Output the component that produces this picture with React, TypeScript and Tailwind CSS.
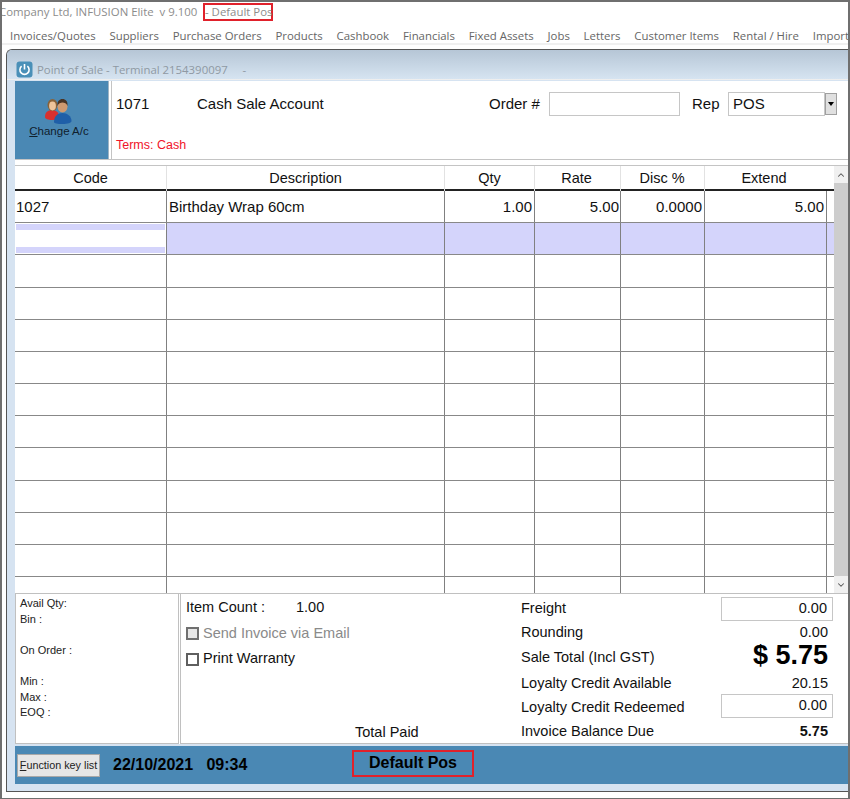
import { ChevronDown, ChevronUp } from "lucide-react";

const menuItems = [
  "Invoices/Quotes",
  "Suppliers",
  "Purchase Orders",
  "Products",
  "Cashbook",
  "Financials",
  "Fixed Assets",
  "Jobs",
  "Letters",
  "Customer Items",
  "Rental / Hire",
  "Import",
];

const columns = "grid grid-cols-[152px_278px_90px_86px_84px_122px_7px]";
const emptyRows = Array.from({ length: 11 }, (_, i) => i);

function PowerIcon() {
  return (
    <svg width="17" height="17" viewBox="0 0 17 17" className="shrink-0">
      <rect x="0.5" y="0.5" width="16" height="16" rx="3" fill="#4a90b8" />
      <path d="M5.6 5.2a4.6 4.6 0 1 0 5.8 0" fill="none" stroke="#fff" strokeWidth="1.6" />
      <path d="M8.5 3v5.4" stroke="#fff" strokeWidth="1.6" />
    </svg>
  );
}

function PeopleIcon() {
  return (
    <svg width="30" height="27" viewBox="0 0 30 27">
      <path d="M1 20c0-5 3-7 7-7s7 2 7 7c0 2-3 3-7 3s-7-1-7-3z" fill="#d8302f" />
      <ellipse cx="8.5" cy="8" rx="5" ry="6" fill="#8a6238" />
      <ellipse cx="8.5" cy="9" rx="3.4" ry="4.4" fill="#eec49a" />
      <path d="M10 25c0-6 4-9 8.5-9s9 3 9 8c0 2-4 3-9 3s-8.5-.5-8.5-2z" fill="#1f5fa8" />
      <ellipse cx="18.5" cy="9.5" rx="5" ry="6" fill="#d09a70" />
      <path d="M13.5 9c-.5-5 2-7 5-7s5.5 2 5 7c-1-3-3-3.5-5-3.5s-4 .5-5 3.5z" fill="#4a3424" />
    </svg>
  );
}

function Checkbox({ disabled }: { disabled?: boolean }) {
  return (
    <span
      className={
        disabled
          ? "w-[13px] h-[13px] border-2 border-[#6f6f6f] bg-[#e6e6e6] shrink-0"
          : "w-[13px] h-[13px] border-2 border-[#5f5f5f] bg-white shrink-0"
      }
    />
  );
}

export default function App() {
  return (
    <div className="w-[850px] h-[799px] bg-white border-t-2 border-l-2 border-r-2 border-b border-[#6f6f6f] overflow-hidden flex flex-col font-[Arial,sans-serif] text-[#111]">
      {/* Title */}
      <div className="h-[19px] shrink-0 flex items-center font-[Open_Sans,sans-serif] text-[11.4px] text-[#8c8c8c] whitespace-pre -ml-[3px]">
        <span className="w-[204px]">Company Ltd, INFUSION Elite  v 9.100</span>
        <span className="w-[70px] h-[18px] flex items-center border-2 border-[#e0212b]">- Default Pos</span>
      </div>

      {/* Menu */}
      <div className="h-[24px] shrink-0 flex items-center gap-[13.8px] pl-[8px] pt-[8px] font-[Open_Sans,sans-serif] text-[11.4px] text-[#666] whitespace-nowrap border-b-2 border-[#f0f0f0]">
        {menuItems.map((item) => (
          <span key={item}>{item}</span>
        ))}
      </div>

      {/* Window */}
      <div className="mt-[4px] ml-[4px] h-[743px] shrink-0 border-t border-l border-b border-[#555] rounded-tl-md bg-[#d6e3f1] flex flex-col overflow-hidden">
        <div className="h-[30px] shrink-0 flex items-center gap-[4px] pl-[9px] pt-[10px] bg-gradient-to-b from-[#b6c6d6] to-[#d6e4f1] border-b border-[#eeeeee] font-[Open_Sans,sans-serif] text-[11.4px] text-[#8f99a3] whitespace-pre">
          <PowerIcon />
          <span>Point of Sale - Terminal 2154390097     -</span>
        </div>

        <div className="flex-1 flex flex-col pl-[8px] pt-[1px] min-h-0">
          {/* Account header */}
          <div className="h-[79px] shrink-0 flex bg-white border-b border-[#c4c4c4]">
            <div className="w-[94px] shrink-0 bg-[#4a88b4] flex flex-col items-center pt-[16px] pr-[5px] text-[11.5px] text-[#10202c] border-r border-[#9fb4c4]">
              <PeopleIcon />
              <span className="-mt-[1px]">
                <span className="underline">C</span>hange A/c
              </span>
            </div>
            <div className="flex-1 flex flex-col pl-[4px] ml-[2px] border-l border-[#c4c4c4]">
              <div className="flex items-center h-[46px] text-[15px]">
                <span className="w-[81px]">1071</span>
                <span className="w-[292px]">Cash Sale Account</span>
                <span className="w-[60px]">Order #</span>
                <span className="w-[131px] h-[24px] border border-[#c6c6c6]" />
                <span className="ml-[12px] w-[36px]">Rep</span>
                <span className="w-[97px] h-[24px] border border-[#c6c6c6] flex items-center pl-[4px]">POS</span>
                <span className="w-[12px] h-[22px] border border-[#a0a0a0] bg-[#e0e0e0] flex items-center justify-center">
                  <span className="border-x-[3.5px] border-x-transparent border-t-[4px] border-t-black" />
                </span>
              </div>
              <div className="mt-[9px] text-[12.5px] text-[#f0142a]">Terms: Cash</div>
            </div>
          </div>

          <div className="h-[5px] shrink-0 bg-white" />

          {/* Lines grid */}
          <div className="h-[428px] shrink-0 flex bg-white border-t border-[#c4c4c4] overflow-hidden">
            <div className="w-[819px] shrink-0 flex flex-col overflow-hidden">
              <div className={`${columns} h-[25px] shrink-0 border-b-2 border-[#222] text-[14.5px] text-center leading-[25px]`}>
                <div className="border-r border-[#e2e2e2]">Code</div>
                <div className="border-r border-[#e2e2e2]">Description</div>
                <div className="border-r border-[#e2e2e2]">Qty</div>
                <div className="border-r border-[#e2e2e2] pr-[2px]">Rate</div>
                <div className="border-r border-[#e2e2e2] pr-[1px]">Disc %</div>
                <div className="pr-[4px]">Extend</div>
              </div>

              <div className={`${columns} h-[32.18px] shrink-0 border-b border-[#888] text-[15px] leading-[31px]`}>
                <div className="border-r border-[#808080] pl-[1px]">1027</div>
                <div className="border-r border-[#808080] pl-[2px]">Birthday Wrap 60cm</div>
                <div className="border-r border-[#808080] pr-[2px] text-right">1.00</div>
                <div className="border-r border-[#808080] pr-[1px] text-right">5.00</div>
                <div className="border-r border-[#808080] pr-[2px] text-right">0.0000</div>
                <div className="border-r border-[#808080] pr-[2px] text-right">5.00</div>
                <div />
              </div>

              <div className={`${columns} h-[32.18px] shrink-0 border-b border-[#888]`}>
                <div className="border-r border-[#808080] px-[1px] py-[1px] flex flex-col justify-between">
                  <div className="h-[6px] bg-[#d4d4fb]" />
                  <div className="h-[6px] bg-[#d4d4fb]" />
                </div>
                <div className="border-r border-[#808080] bg-[#d4d4fb]" />
                <div className="border-r border-[#808080] bg-[#d4d4fb]" />
                <div className="border-r border-[#808080] bg-[#d4d4fb]" />
                <div className="border-r border-[#808080] bg-[#d4d4fb]" />
                <div className="border-r border-[#808080] bg-[#d4d4fb]" />
                <div className="bg-[#d4d4fb]" />
              </div>

              {emptyRows.map((row) => (
                <div key={row} className={`${columns} h-[32.18px] shrink-0 border-b border-[#888]`}>
                  <div className="border-r border-[#808080]" />
                  <div className="border-r border-[#808080]" />
                  <div className="border-r border-[#808080]" />
                  <div className="border-r border-[#808080]" />
                  <div className="border-r border-[#808080]" />
                  <div className="border-r border-[#808080]" />
                  <div />
                </div>
              ))}
            </div>

            {/* Scrollbar */}
            <div className="flex-1 flex flex-col bg-[#f0f0f0]">
              <div className="h-[17px] flex items-center justify-center">
                <ChevronUp size={10} strokeWidth={2.5} className="text-[#555]" />
              </div>
              <div className="flex-1 bg-[#cdcdcd]" />
              <div className="h-[17px] flex items-center justify-center">
                <ChevronDown size={10} strokeWidth={2.5} className="text-[#555]" />
              </div>
            </div>
          </div>

          {/* Totals */}
          <div className="h-[151px] shrink-0 flex bg-white border-t border-[#c0c0c0]">
            <div className="w-[164px] shrink-0 border-r border-b border-l border-[#c0c0c0] pl-[4px] pt-[2px] text-[11px] leading-[15.6px] text-[#222]">
              <div>Avail Qty:</div>
              <div>Bin :</div>
              <div>&nbsp;</div>
              <div>On Order :</div>
              <div>&nbsp;</div>
              <div>Min :</div>
              <div>Max :</div>
              <div>EOQ :</div>
            </div>

            <div className="ml-[1px] flex-1 flex border-l border-b border-[#c0c0c0] text-[14.5px]">
              <div className="w-[340px] shrink-0 flex flex-col pl-[5px] pt-[1px]">
                <div className="h-[26px] shrink-0 flex items-center">
                  <span className="w-[110px]">Item Count :</span>
                  <span>1.00</span>
                </div>
                <div className="h-[25px] shrink-0 flex items-center gap-[4px] text-[#8a8a8a]">
                  <Checkbox disabled />
                  <span>Send Invoice via Email</span>
                </div>
                <div className="h-[26px] shrink-0 flex items-center gap-[4px]">
                  <Checkbox />
                  <span>Print Warranty</span>
                </div>
                <div className="mt-auto -mb-[2px] h-[24px] shrink-0 flex items-center pl-[169px] whitespace-nowrap">Total Paid</div>
              </div>

              <div className="flex-1 flex flex-col pt-[3px] pr-[14px]">
                <div className="h-[24px] shrink-0 flex items-center">
                  <span className="w-[200px]">Freight</span>
                  <span className="w-[112px] h-[24px] border border-[#c6c6c6] flex items-center justify-end pr-[5px]">0.00</span>
                </div>
                <div className="h-[24px] shrink-0 flex items-center">
                  <span className="w-[200px]">Rounding</span>
                  <span className="w-[107px] text-right">0.00</span>
                </div>
                <div className="h-[26px] shrink-0 flex items-center">
                  <span className="w-[200px]">Sale Total (Incl GST)</span>
                  <span className="w-[107px] text-right text-[27px] font-bold text-black -mt-[5px]">$ 5.75</span>
                </div>
                <div className="h-[25px] shrink-0 flex items-center">
                  <span className="w-[200px]">Loyalty Credit Available</span>
                  <span className="w-[107px] text-right">20.15</span>
                </div>
                <div className="h-[24px] shrink-0 flex items-center">
                  <span className="w-[200px]">Loyalty Credit Redeemed</span>
                  <span className="w-[112px] h-[24px] -mt-[4px] border border-[#c6c6c6] flex items-center justify-end pr-[5px]">0.00</span>
                </div>
                <div className="h-[24px] shrink-0 flex items-center">
                  <span className="w-[200px]">Invoice Balance Due</span>
                  <span className="w-[107px] text-right font-bold">5.75</span>
                </div>
              </div>
            </div>
          </div>

          {/* Status bar */}
          <div className="h-[38px] shrink-0 mt-[2px] bg-[#4a88b4] flex items-center pl-[2px]">
            <span className="w-[83px] h-[23px] bg-[#e6e6e6] border border-[#a8a8a8] flex items-center justify-center text-[10.8px] text-[#222] whitespace-nowrap">
              <span>
                <span className="underline">F</span>unction key list
              </span>
            </span>
            <span className="ml-[13px] w-[239px] text-[16px] font-bold text-black whitespace-pre">22/10/2021   09:34</span>
            <span className="w-[122px] h-[27px] -mt-[4px] border-2 border-[#e0212b] flex items-center justify-center text-[16px] font-bold text-black">
              Default Pos
            </span>
          </div>
          <div className="h-[6px] shrink-0" />
        </div>
      </div>
    </div>
  );
}
